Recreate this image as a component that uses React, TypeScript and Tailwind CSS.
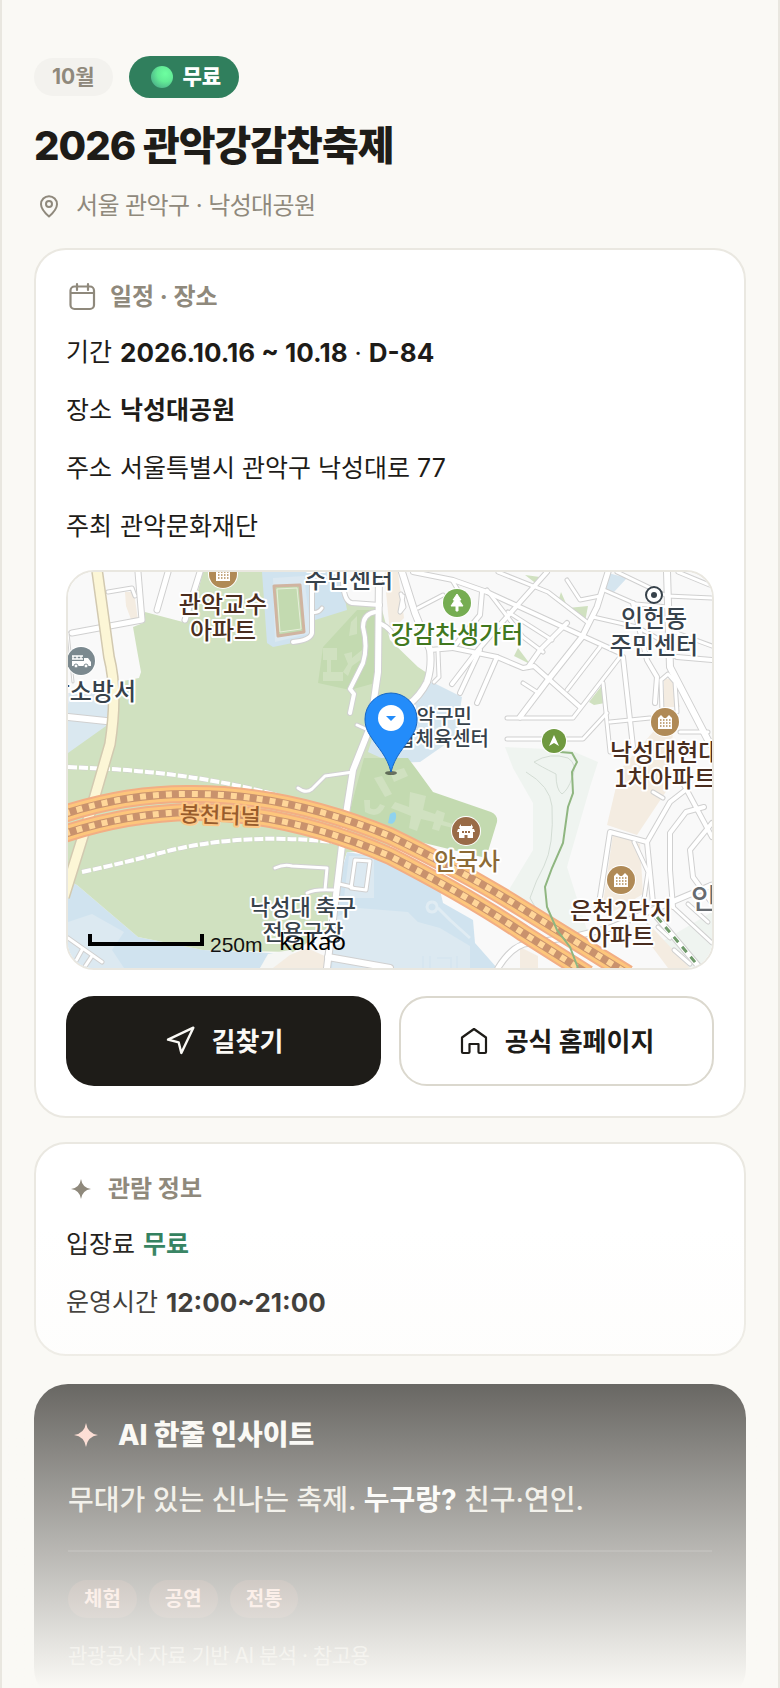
import type { ReactNode } from 'react';
import { Navigation } from 'lucide-react';

const fontClass = "font-[Inter,'Noto_Sans_CJK_KR',sans-serif]";

const tags = ['체험', '공연', '전통'];

type Road = { d: string; w?: number };

const roads: Road[] = [
  // west side
  { d: 'M40 20 L64 16 L67 24' },
  { d: 'M70 0 L74 48 L4 61', w: 5 },
  { d: 'M100 0 L89 38', w: 5 },
  { d: 'M132 0 L117 48', w: 5 },
  { d: 'M0 145 L38 149', w: 6 },
  { d: 'M0 61 L5 110', w: 1 },
  { d: 'M0 366 L34 390 M4 396 L14 378 M16 396 L24 384' },
  // around the sports field
  { d: 'M244 11 L244 61 Q243 68 225 70', w: 4 },
  { d: 'M244 40 Q250 42 254 36' },
  { d: 'M275 10 Q276 30 284 31 L312 33', w: 4 },
  { d: 'M307 40 Q295 42 295 55 Q300 75 295 91 L282 117 L286 122 L282 141', w: 4 },
  { d: 'M311 0 L310 100 L302 155 L285 198 L277 248 L269 315 L259 396', w: 6 },
  { d: 'M310 51 Q318 53 324 61', w: 4 },
  { d: 'M289 153 L300 158' },
  { d: 'M230 216 Q238 222 244 217 L257 204 L285 200' },
  { d: 'M207 296 Q216 292 224 294 L259 296 L257 318 M239 321 Q247 317 265 318' },
  { d: 'M287 288 L302 289 L298 318 L283 316 Z' },
  { d: 'M271 312 L284 315' },
  { d: 'M260 385 L322 396', w: 6 },
  // village blocks, north
  { d: 'M333 22 L336 35 L332 40 L335 24' },
  { d: 'M334 0 L347 41 L362 78 Q364 95 359 110 Q352 124 340 133', w: 6 },
  { d: 'M350 36 L375 23' },
  { d: 'M345 0 L385 8 L419 20 L519 66 L552 81', w: 4 },
  { d: 'M384 8 L390 18' },
  { d: 'M479 0 L429 56 L410 78 L384 112', w: 4 },
  { d: 'M414 20 L412 43 L385 76 L362 78', w: 4 },
  { d: 'M430 0 L480 20 L519 50' },
  { d: 'M419 18 L455 65 L475 80' },
  { d: 'M440 40 L484 68' },
  { d: 'M385 76 L429 85 L455 96 L466 94 L512 135', w: 4 },
  { d: 'M460 95 L472 78 L499 51', w: 4 },
  { d: 'M540 0 L529 35 L514 65 L480 108 L452 145', w: 5 },
  { d: 'M439 146 L505 146 L552 85' },
  { d: 'M455 111 L469 120' },
  { d: 'M499 118 L532 75' },
  { d: 'M429 85 L409 131', w: 4 },
  { d: 'M412 78 L392 121', w: 4 },
  { d: 'M370 80 L371 105 L366 110' },
  { d: 'M499 8 L512 28 L532 24' },
  { d: 'M549 0 L599 24 L644 26' },
  { d: 'M525 45 L569 55 L600 72' },
  { d: 'M536 18 L568 32 L600 35' },
  { d: 'M610 0 L644 14' },
  { d: 'M606 60 L644 74' },
  { d: 'M599 0 L602 95 L642 172', w: 6 },
  { d: 'M609 85 L644 88', w: 4 },
  { d: 'M555 85 L565 175', w: 4 },
  { d: 'M565 31 L579 88 L589 105 L587 131', w: 4 },
  { d: 'M535 111 L542 180' },
  { d: 'M542 150 L582 146' },
  { d: 'M439 167 L515 167 L539 141' },
  { d: 'M594 140 L593 108 L600 102 L607 110 L609 140 M612 160 L640 160' },
  // village blocks, south
  { d: 'M530 338 L542 260 L579 270 L585 331', w: 4 },
  { d: 'M620 216 L602 230 L579 270', w: 4 },
  { d: 'M566 270 L580 300 L574 340' },
  { d: 'M636 235 L618 240 L602 261 L602 298 L605 335', w: 4 },
  { d: 'M644 251 L622 278 L625 305 L644 331', w: 4 },
  { d: 'M615 211 L644 265', w: 4 },
  { d: 'M585 220 L595 226' },
  { d: 'M430 396 Q445 372 462 371 L504 365 L542 356 L644 313', w: 5 },
  { d: 'M605 335 L644 371' },
  { d: 'M620 332 L640 350' },
  { d: 'M589 345 L632 396', w: 5 },
  { d: 'M590 355 L602 366 M606 378 L622 392' },
];

const UPPER_TUNNEL = 'M-4 242 Q60 221 125 222 Q220 222 322 264 Q400 302 455 337 L560 402';
const LOWER_TUNNEL = 'M-4 262 Q60 241 125 240 Q220 240 322 284 Q400 324 455 361 L520 402';

function MapLabel({
  x,
  y,
  children,
  size = 24,
  fill = '#4a2e20',
  anchor = 'middle',
  halo = '#ffffff',
  rotate = 0,
}: {
  x: number;
  y: number;
  children: ReactNode;
  size?: number;
  fill?: string;
  anchor?: 'start' | 'middle' | 'end';
  halo?: string;
  rotate?: number;
}) {
  return (
    <text
      x={x}
      y={y}
      fontSize={size}
      fill={fill}
      textAnchor={anchor}
      stroke={halo}
      strokeWidth={4}
      strokeLinejoin="round"
      paintOrder="stroke"
      fontWeight={500}
      transform={rotate ? `rotate(${rotate} ${x} ${y})` : undefined}
      className="font-['Noto_Sans_CJK_KR',sans-serif]"
    >
      {children}
    </text>
  );
}

function ApartmentMarker({ x, y }: { x: number; y: number }) {
  return (
    <g transform={`translate(${x} ${y})`}>
      <circle r="15" fill="#fff" />
      <circle r="14" fill="#b08a56" />
      <path d="M-7 7 V-4 L-4 -7 L-1 -4 H1 L4 -7 L7 -4 V7 Z" fill="#fff" />
      <path d="M-5 -2 H6 M-5 1 H6 M-5 4 H6" stroke="#b08a56" strokeWidth="1.5" strokeDasharray="1.5 1.5" />
    </g>
  );
}

function Tunnel({ d }: { d: string }) {
  return (
    <g fill="none">
      <path d={d} stroke="#f2ae84" strokeWidth="18" />
      <path d={d} stroke="#fdc67c" strokeWidth="14" />
      <path d={d} stroke="#c9926d" strokeWidth="8" />
      <path d={d} stroke="#ffd699" strokeWidth="6" strokeDasharray="6 7" />
    </g>
  );
}

function VenueMap() {
  return (
    <svg
      viewBox="0 0 644 396"
      preserveAspectRatio="xMidYMid slice"
      role="img"
      aria-label="낙성대공원 지도"
      className="block h-[396px] w-full"
    >
      <rect width="644" height="396" fill="#f9f9f9" />

      {/* water-blue facility lots */}
      <path d="M0 121 H50 L40 156 L0 182 Z" fill="#dae8f0" />
      <path d="M0 308 L9 313 L70 365 L135 378 L225 382 L192 396 H0 Z" fill="#d0e3ef" />
      <path d="M0 350 L24 342 L56 360 L44 378 L56 396 H0 Z" fill="#dce9f1" />
      <path d="M364 110 L394 125 L388 165 L352 190 L296 192 L304 140 L342 131 Z" fill="#d5e5ef" />
      <path d="M540 1 L559 6 L545 21 L536 16 Z" fill="#d5e5ef" />

      {/* parkland */}
      <path
        d="M77 40 L115 50 L127 30 L135 0 H312 V30 L322 68 L350 95 L359 101 L354 118 L342 131 L310 148 L300 180 L322 190 L322 280 L279 280 L262 330 L259 358 L225 380 L135 378 L70 365 L9 313 L0 308 V181 L38 154 L50 110 L71 106 L73 100 L69 78 L65 55 L75 51 Z"
        fill="#d0e1c0"
      />
      <path d="M289 38 L255 75 L250 111 L282 118 L307 111 V38 Z" fill="#c3dab0" />
      <path
        d="M255 76 h14 v12 h-6 v12 h12 v9 h-20 v-9 h4 v-12 h-4 Z M276 82 l8 -2 v6 l10 -8 l4 6 l-14 10 l-4 10 l-5 -4 l5 -8 Z M283 50 l6 -6 v18 l-8 2 Z"
        fill="#d0e1c0"
      />
      <path d="M194 0 L199 71 L205 75 L239 68 L247 48 L279 38 L272 0 Z" fill="#d0e3ef" />
      <path d="M272 0 L275 21 L285 31 L310 33 V0 Z" fill="#f9f9f9" />
      <path d="M205 6 L236 4 L243 61 L207 70 Z" fill="#dbe8f1" />
      <path d="M206 14 L232 13 L236 60 L210 64 Z" fill="#c3dab0" stroke="#d0b4a0" strokeWidth="3" strokeLinejoin="round" />
      <path d="M209 17 L229 16 L233 57 L212 60 Z" fill="none" stroke="#e6efda" strokeWidth="1" />
      <path d="M296 186 H340 L349 198 L365 220 L423 240 Q430 243 429 250 L418 286 L352 270 L322 256 L279 250 Z" fill="#c3dab0" />
      <path
        d="M342 220 l16 4 l-3 14 l12 4 l2 -4 l8 3 l-2 8 l10 3 v4 l-12 -3 l-2 6 l-7 -2 l2 -7 l-13 -3 l-4 12 l-8 -3 l2 -12 l-20 -8 l4 -6 l14 5 Z M306 206 l8 -2 l10 18 l-7 3 Z M322 200 l14 -4 l4 8 l-14 6 Z M296 228 h6 v8 q6 4 10 -4 l5 2 q-6 14 -20 6 Z"
        fill="#d0e1c0"
      />
      <path d="M322 242 q7 -5 6 4 q-2 8 -8 5 Z" fill="#8fd2ee" />

      {/* south lots */}
      <path d="M279 280 L322 287 L372 318 L375 331 L405 348 L407 371 L429 396 H262 L268 320 Z" fill="#d0e3ef" />
      <path d="M268 345 L290 336 L340 340 L350 350 L372 356 L402 374 V396 H264 Z" fill="#dce9f1" />
      <path d="M281 284 H306 V326 H276 Z" fill="#dce9f1" />
      <path d="M364 330 a5 5 0 1 0 .1 0 M370 336 L382 348 L402 366" fill="none" stroke="#e0ecf3" strokeWidth="3" />
      <path d="M355 384 v12 M362 384 v12 M369 386 h14 v10 M389 384 v12" stroke="#d7e6f0" strokeWidth="2" fill="none" />
      <path d="M192 396 L200 382 L222 378 L242 396 Z" fill="#f5f6f4" />
      <path d="M205 396 L222 383 L239 376 L259 385 V396 Z" fill="#f4ece1" />

      {/* valley */}
      <path
        d="M437 175 L502 178 L530 190 L522 215 L499 295 L519 358 L500 362 L439 321 L465 278 V231 L445 196 Z"
        fill="#eff4f0"
      />
      <path d="M590 372 L644 340 V396 H600 Z" fill="#eff4f0" />
      <path d="M552 198 L539 253 L569 263 L599 218 L606 150 L585 160 Z" fill="#f4ece1" />
      <path d="M545 262 L572 272 L575 322 L545 340 L535 331 Z" fill="#f4ece1" />
      <path d="M579 350 L622 396 H600 L576 364 Z" fill="#f4ece1" />
      <path d="M596 106 L606 108 L612 135 L596 135 Z" fill="#f4ece1" />
      <path d="M316 0 H330 L336 46 L322 60 Z" fill="#f4ece1" />
      <path d="M57 20 H66 L70 48 L64 50 L58 34 Z" fill="#f4ece1" />
      <path d="M452 375 L470 384 V396 H452 Z" fill="#f4ece1" />
      <path d="M457 3 L472 5 L470 13 Z M493 20 L500 36 L520 34 L517 50 L490 30 Z M450 76 L462 92 L446 84 Z M521 130 L535 112 L537 131 L526 133 Z" fill="#d0e1c0" />
      <path
        d="M466 190 q16 -10 34 -4 q10 6 4 20 q-4 12 -10 16 q-6 -4 -6 -20 q-16 -8 -22 -12 M458 200 q24 14 26 34 q2 40 -8 60 q-8 14 -14 32 q10 22 32 28"
        fill="none"
        stroke="#d3dcd4"
        strokeWidth="1"
      />

      {/* streets: casing first, white fill on top */}
      <g fill="none" stroke="#d0d0d0" strokeLinecap="round" strokeLinejoin="round">
        {roads.map(road => (
          <path key={road.d} d={road.d} strokeWidth={(road.w ?? 3) + 2} />
        ))}
      </g>
      <g fill="none" stroke="#ffffff" strokeLinecap="round" strokeLinejoin="round">
        {roads.map(road => (
          <path key={road.d} d={road.d} strokeWidth={road.w ?? 3} />
        ))}
      </g>
      <path d="M589 345 L632 396" stroke="#6f9a6a" strokeWidth="3" strokeDasharray="7 6" />

      <g fill="none">
        <path d="M0 195 L42 197 Q130 202 209 223" stroke="#cfcfcf" strokeWidth="5" strokeDasharray="8 3" />
        <path d="M0 195 L42 197 Q130 202 209 223" stroke="#fff" strokeWidth="4" strokeDasharray="9 2" />
        <path d="M14 300 Q60 290 92 281 Q170 260 265 270" stroke="#cfcfcf" strokeWidth="5" strokeDasharray="8 3" />
        <path d="M14 300 Q60 290 92 281 Q170 260 265 270" stroke="#fff" strokeWidth="4" strokeDasharray="9 2" />
      </g>

      <g fill="none" strokeLinejoin="round">
        <path d="M29 -2 L41 85 Q50 120 42 172 L20 248 L-4 325" stroke="#d2c9b0" strokeWidth="12" />
        <path d="M29 -2 L41 85 Q50 120 42 172 L20 248 L-4 325" stroke="#fcf6d6" strokeWidth="9" />
      </g>

      <Tunnel d={LOWER_TUNNEL} />
      <Tunnel d={UPPER_TUNNEL} />

      <path
        d="M492 180 L504 181 L509 190 L504 200 L505 221 L500 235 L495 271 L484 296 L477 315 L479 335 L489 358 L502 375 L510 396"
        fill="none"
        stroke="#8fb680"
        strokeWidth="2"
      />

      {/* place markers */}
      <ApartmentMarker x={155} y={2} />
      <ApartmentMarker x={597} y={150} />
      <ApartmentMarker x={553} y={308} />
      <g transform="translate(389 31)">
        <circle r="15" fill="#fff" />
        <circle r="14" fill="#76ad52" />
        <path d="M0 -9 L4 -3 H2 L6 3 H1 V8 H-1 V3 H-6 L-2 -3 H-4 Z" fill="#fff" stroke="#fff" />
      </g>
      <g transform="translate(13 89)">
        <circle r="15" fill="#fff" />
        <circle r="14" fill="#7b898f" />
        <path d="M-9 -5 H2 M-9 -2 H2 M-8 -5 V-2 M-4 -5 V-2 M0 -5 V-2" stroke="#fff" strokeWidth="1.4" />
        <path d="M-9 0 H3 V-3 H7 L10 1 V5 H-9 Z" fill="#fff" />
        <circle cx="-5" cy="5" r="2" fill="#fff" stroke="#7b898f" />
        <circle cx="5" cy="5" r="2" fill="#fff" stroke="#7b898f" />
      </g>
      <g transform="translate(398 259)">
        <circle r="15" fill="#fff" />
        <circle r="14" fill="#996b47" />
        <path d="M-5 -7 V-5 H5 V-7 L7 -4 L6 -2 H8 L9 1 H7 V7 H-7 V1 H-9 L-8 -2 H-6 L-7 -4 Z" fill="#fff" />
        <path d="M-4 1 H-2 M-1 1 H1 M2 1 H4" stroke="#996b47" strokeWidth="2" />
        <rect x="-1.5" y="4" width="3" height="3" fill="#996b47" />
      </g>
      <g transform="translate(486 169)">
        <circle r="13" fill="#fff" />
        <circle r="12" fill="#6f993f" />
        <path d="M0 -6 L5 5 L0 2 L-5 5 Z" fill="#fff" />
      </g>
      <circle cx="586" cy="23" r="8" fill="#fff" stroke="#37424b" strokeWidth="2" />
      <circle cx="586" cy="23" r="3" fill="#37424b" />

      <MapLabel x={155} y={41}>관악교수</MapLabel>
      <MapLabel x={155} y={67}>아파트</MapLabel>
      <MapLabel x={281} y={16} fill="#37424b">주민센터</MapLabel>
      <MapLabel x={68} y={128} anchor="end" fill="#37424b">악소방서</MapLabel>
      <MapLabel x={389} y={71} fill="#41781f">강감찬생가터</MapLabel>
      <MapLabel x={586} y={55} fill="#37424b">인헌동</MapLabel>
      <MapLabel x={586} y={82} fill="#37424b">주민센터</MapLabel>
      <MapLabel x={404} y={152} size={20} anchor="end" fill="#37424b">관악구민</MapLabel>
      <MapLabel x={421} y={174} size={20} anchor="end" fill="#37424b">종합체육센터</MapLabel>
      <MapLabel x={542} y={189} anchor="start">낙성대현대</MapLabel>
      <MapLabel x={546} y={215} anchor="start">1차아파트</MapLabel>
      <MapLabel x={399} y={298} fill="#8c6a35">안국사</MapLabel>
      <MapLabel x={553} y={347}>은천2단지</MapLabel>
      <MapLabel x={553} y={373}>아파트</MapLabel>
      <MapLabel x={623} y={337} size={28} anchor="start" fill="#666b70">인헌</MapLabel>
      <MapLabel x={235} y={343} size={22} fill="#37424b">낙성대 축구</MapLabel>
      <MapLabel x={235} y={368} size={22} fill="#37424b">전용구장</MapLabel>
      <MapLabel x={152} y={251} size={22} fill="#985c2c" halo="#fdc887" rotate={2}>봉천터널</MapLabel>

      {/* venue pin */}
      <ellipse cx="323" cy="201" rx="6" ry="2" fill="#000" opacity="0.5" />
      <path
        d="M323 200 C319 184 310 176 303 165 C299 159 297 154 297 147 A26 26 0 0 1 349 147 C349 154 347 159 343 165 C336 176 327 184 323 200 Z"
        fill="#238cfa"
        stroke="#1767c4"
        strokeWidth="1"
      />
      <circle cx="323" cy="146" r="13" fill="#fff" />
      <path d="M318 144 H328 L323 149 Z" fill="#238cfa" />

      <path d="M22 362 V372 H134 V362" fill="none" stroke="#000" strokeWidth="4" />
      <text x="142" y="380" fontSize="21" fill="#111" className="font-['Liberation_Sans',sans-serif]">
        250m
      </text>
      <text x="211" y="378" fontSize="24" fill="#000" className="font-['Noto_Sans',sans-serif]">
        kakao
      </text>
    </svg>
  );
}

function PinIcon() {
  return (
    <svg viewBox="0 0 30 30" fill="none" stroke="currentColor" strokeWidth="2" strokeLinejoin="round" className="size-[30px]">
      <path d="M15 25.5 C10.5 21.5 7 17.5 7 13.2 A8 8 0 0 1 23 13.2 C23 17.5 19.5 21.5 15 25.5 Z" />
      <circle cx="15" cy="13" r="3" />
    </svg>
  );
}

function CalendarIcon() {
  return (
    <svg viewBox="0 0 32 32" fill="none" stroke="currentColor" strokeWidth="2.2" strokeLinecap="round" className="size-8">
      <rect x="4.5" y="5.5" width="23.500" height="22.500" rx="4" />
      <path d="M5 12 H28 M11 3 V9 M22 3 V9" />
    </svg>
  );
}

function HouseIcon() {
  return (
    <svg viewBox="0 0 30 30" fill="none" stroke="currentColor" strokeWidth="2.2" strokeLinejoin="round" className="size-[30px]">
      <path d="M15 3 L27 11.5 V26 Q27 27 26 27 H20.5 Q19.5 27 19.5 26 V18 H10.5 V26 Q10.5 27 9.5 27 H4 Q3 27 3 26 V11.5 Z" />
    </svg>
  );
}

function SparkIcon({ className }: { className: string }) {
  return (
    <svg viewBox="0 0 24 24" fill="currentColor" className={className}>
      <path d="M12 4 Q13 11 20 12 Q13 13 12 20 Q11 13 4 12 Q11 11 12 4 Z" />
    </svg>
  );
}

function InfoRow({ label, children }: { label: string; children: ReactNode }) {
  return (
    <div className="flex h-[42px] items-center gap-2">
      <dt>{label}</dt>
      <dd>{children}</dd>
    </div>
  );
}

export default function App() {
  return (
    <main
      className={`relative h-screen overflow-hidden border-x-2 border-[#e9e7e0] bg-[#faf9f5] px-8 pt-14 text-[#1e1c18] ${fontClass}`}
    >
      <header>
        <div className="flex items-center gap-4">
          <span className="flex h-[38px] items-center rounded-full bg-[#f3f2ee] px-[18px] text-[21px] font-bold text-[#8f897c]">
            10월
          </span>
          <span className="flex h-[42px] items-center gap-2.5 rounded-full bg-[#307f5d] pr-[18px] pl-[22px] text-[21px] font-extrabold text-white">
            <span className="size-[22px] rounded-full bg-[radial-gradient(circle_at_65%_35%,#6dffa0_0%,#62eb96_40%,#4fb98b_75%,#4d9a96_100%)]" />
            무료
          </span>
        </div>
        <h1 className="mt-5 text-[40px] leading-[56px] font-extrabold tracking-tight">2026 관악강감찬축제</h1>
        <p className="mt-4 flex h-8 items-center gap-3 text-[24px] tracking-tight text-[#8f897c]">
          <PinIcon />
          서울 관악구 · 낙성대공원
        </p>
      </header>

      <section className="mt-[26px] rounded-[32px] border-2 border-[#eae8e1] bg-white p-[30px]">
        <h2 className="flex h-[34px] items-center gap-3 text-[24px] font-bold text-[#8f897c]">
          <CalendarIcon />
          일정 · 장소
        </h2>
        <dl className="mt-[18px] flex flex-col gap-4 text-[25px]">
          <InfoRow label="기간">
            <b className="text-[26px]">2026.10.16 ~ 10.18</b> · <b className="text-[26px]">D-84</b>
          </InfoRow>
          <InfoRow label="장소">
            <b>낙성대공원</b>
          </InfoRow>
          <InfoRow label="주소">서울특별시 관악구 낙성대로 77</InfoRow>
          <InfoRow label="주최">관악문화재단</InfoRow>
        </dl>

        <div className="mt-[22px] overflow-hidden rounded-[28px] border-2 border-[#e9e7e0]">
          <VenueMap />
        </div>

        <div className="mt-[26px] grid grid-cols-2 gap-[18px] text-[26px] font-bold">
          <button className="flex h-[90px] items-center justify-center gap-4 rounded-[28px] bg-[#1e1c18] text-[#faf9f5]">
            <Navigation size={32} strokeWidth={1.8} />
            길찾기
          </button>
          <a
            href="#homepage"
            className="flex h-[90px] items-center justify-center gap-4 rounded-[28px] border-2 border-[#dbd8ce] bg-white"
          >
            <HouseIcon />
            공식 홈페이지
          </a>
        </div>
      </section>

      <section className="mt-6 rounded-[32px] border-2 border-[#eae8e1] bg-white p-[30px]">
        <h2 className="flex h-[30px] items-center gap-3 text-[24px] font-bold text-[#8f897c]">
          <SparkIcon className="size-[30px]" />
          관람 정보
        </h2>
        <dl className="mt-5 flex flex-col gap-4 text-[25px]">
          <InfoRow label="입장료">
            <b className="text-[#307f5d]">무료</b>
          </InfoRow>
          <InfoRow label="운영시간">
            <b className="text-[26px]">12:00~21:00</b>
          </InfoRow>
        </dl>
      </section>

      <section className="mt-7 rounded-[34px] bg-[#1e1c18] px-[34px] pt-8 pb-7 text-[28px]">
        <h2 className="flex h-[38px] items-center gap-3.5 font-extrabold text-[#faf9f5]">
          <SparkIcon className="size-9 text-[#ffc9bb]" />
          AI 한줄 인사이트
        </h2>
        <p className="mt-[22px] leading-[48px] font-medium text-[#e8e5dc]">
          무대가 있는 신나는 축제. <b className="text-white">누구랑?</b> 친구·연인.
        </p>
        <hr className="mt-[26px] border-t-2 border-white/12" />
        <ul className="mt-7 flex gap-3 text-[20px] font-semibold text-[#ffc9bb]">
          {tags.map(tag => (
            <li key={tag} className="flex h-[38px] items-center rounded-full bg-[#ff8a70]/18 px-4">
              {tag}
            </li>
          ))}
        </ul>
        <p className="mt-[22px] pb-0.5 text-[21px] leading-8 tracking-tight text-[#b3afa4]">
          관광공사 자료 기반 AI 분석 · 참고용
        </p>
      </section>

      <div className="pointer-events-none absolute inset-x-0 bottom-0 h-[460px] bg-linear-to-b from-[#faf9f5]/0 to-[#faf9f5]" />
    </main>
  );
}
